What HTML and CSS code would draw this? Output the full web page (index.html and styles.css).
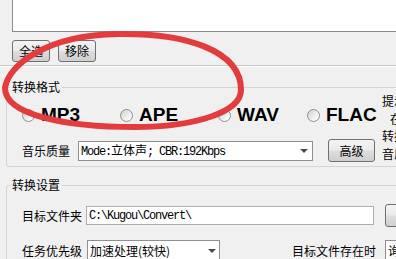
FILE: index.html
```html
<!DOCTYPE html>
<html lang="zh-CN">
<head>
<meta charset="utf-8">
<title>转换</title>
<link rel="stylesheet" href="styles.css">
</head>
<body>
<div class="page">
  <section class="files">
    <div class="listbox"></div>
    <div class="btnrow">
      <button class="btn small">全选</button>
      <button class="btn small">移除</button>
    </div>
  </section>

  <fieldset class="group format">
    <legend>转换格式</legend>
    <div class="format-body">
      <div class="format-main">
        <div class="radios">
          <label class="radio"><span class="dot"></span><span class="rlabel">MP3</span></label>
          <label class="radio"><span class="dot"></span><span class="rlabel">APE</span></label>
          <label class="radio"><span class="dot"></span><span class="rlabel">WAV</span></label>
          <label class="radio"><span class="dot"></span><span class="rlabel">FLAC</span></label>
        </div>
        <div class="quality">
          <span class="lbl">音乐质量</span>
          <div class="combo quality-combo"><span class="mono">Mode:<span class="cjk">立体声</span>; CBR:192Kbps</span><span class="arrow"></span></div>
          <button class="btn adv">高级</button>
        </div>
      </div>
      <div class="tips">
        <div>提示：</div>
        <div class="indent">在转换时</div>
        <div>转换后的</div>
        <div>音质</div>
      </div>
    </div>
  </fieldset>

  <fieldset class="group settings">
    <legend>转换设置</legend>
    <div class="row">
      <span class="lbl">目标文件夹</span>
      <div class="field path"><span class="mono">C:\Kugou\Convert\</span></div>
      <button class="btn browse">浏览</button>
    </div>
    <div class="row">
      <span class="lbl">任务优先级</span>
      <div class="combo prio"><span>加速处理(较快)</span><span class="arrow"></span></div>
      <span class="lbl exist">目标文件存在时</span>
      <div class="combo ask"><span>询问</span></div>
    </div>
  </fieldset>
</div>
<svg class="mark" width="396" height="259" viewBox="0 0 396 259" xmlns="http://www.w3.org/2000/svg">
  <path d="M5,88 C8,66 45,35 118,34 C185,33 241,50 241,90 C241,112 195,127 135,127 C65,127 5,115 5,88 Z" fill="none" stroke="#e23c3d" stroke-width="6"/>
</svg>
</body>
</html>
```

FILE: styles.css
```css
* { box-sizing: border-box; }
html, body { margin: 0; padding: 0; }
body {
  width: 396px;
  height: 259px;
  overflow: hidden;
  position: relative;
  background: #f0f0f0;
  color: #000;
  font-family: "Noto Sans CJK SC", sans-serif;
  font-size: 12px;
  line-height: 14px;
}
.page { width: 460px; }

.files {
  padding: 0 0 3px 12px;
  border-bottom: 1px solid #c9c9c9;
  box-shadow: 0 1px 0 #ffffff;
}
.listbox {
  height: 32px;
  background: #fff;
  border: 1px solid #8a8a8a;
  border-top: none;
}
.btnrow { display: flex; gap: 8px; margin-top: 8px; }

.btn {
  height: 22px;
  padding: 0;
  border: 1px solid #707070;
  border-radius: 3px;
  background: linear-gradient(#f3f3f3, #ebebeb 48%, #dddddd 52%, #cfcfcf);
  font: 12px/14px "Noto Sans CJK SC", sans-serif;
  color: #000;
}
.small { width: 38px; }

.group {
  margin: 14px 0 0 6px;
  padding: 0;
  border: 1px solid #d5d5d5;
  border-radius: 3px;
  min-width: 0;
  width: 450px;
}
.group legend {
  padding: 0 2px;
  margin-left: 3px;
  line-height: 14px;
  font-size: 12px;
}
.settings { margin-top: 11px; }

.format-body { display: flex; }
.format-main { width: 375px; flex: none; padding: 0 0 4px 15px; }
.radios {
  display: grid;
  grid-template-columns: 98px 98px 89px auto;
  align-items: center;
  height: 22px;
  margin-top: 10px;
}
.radio { display: flex; align-items: center; gap: 6px; }
.dot {
  width: 13px;
  height: 13px;
  border-radius: 50%;
  border: 1px solid #8e8f8f;
  background: linear-gradient(135deg, #cfcfcf, #f6f6f6 70%, #ffffff);
}
.rlabel {
  font: bold 19px/22px "Liberation Sans", Arial, sans-serif;
  color: #000;
}

.quality { display: flex; align-items: center; height: 23px; margin-top: 13px; }
.lbl { white-space: nowrap; }
.combo {
  position: relative;
  display: flex;
  align-items: center;
  background: #fff;
  border: 1px solid #8f8f8f;
  padding-left: 2px;
  white-space: nowrap;
  overflow: hidden;
}
.quality-combo { margin-left: 8px; width: 235px; height: 20px; }
.arrow {
  position: absolute;
  right: 4px;
  top: 50%;
  margin-top: -2px;
  border-left: 4px solid transparent;
  border-right: 4px solid transparent;
  border-top: 4px solid #4d4d4d;
}
.adv { margin-left: 15px; width: 47px; height: 23px; }

.mono {
  font-family: "Liberation Mono", monospace;
  font-size: 12px;
  letter-spacing: -1.2px;
}
.mono .cjk {
  font-family: "Noto Sans CJK SC", sans-serif;
  letter-spacing: 0;
}

.tips { margin-top: -2px; line-height: 17.5px; white-space: nowrap; }
.tips .indent { padding-left: 8px; }

.row {
  display: flex;
  align-items: center;
  height: 23px;
  padding-left: 15px;
  margin-top: 12px;
}
.field {
  display: flex;
  align-items: center;
  background: #fff;
  border: 1px solid #abadb3;
  padding-left: 2px;
}
.path { margin-left: 4px; width: 288px; height: 19px; flex: none; }
.browse { margin-left: 11px; width: 60px; height: 23px; flex: none; }
.prio { margin-left: 5px; width: 133px; height: 22px; padding-left: 2px; flex: none; }
.prio .arrow { right: 3px; }
.exist { margin-left: 72px; }
.ask { margin-left: 9px; width: 60px; height: 22px; flex: none; }

.mark {
  position: absolute;
  left: 0;
  top: 0;
  pointer-events: none;
}
```
